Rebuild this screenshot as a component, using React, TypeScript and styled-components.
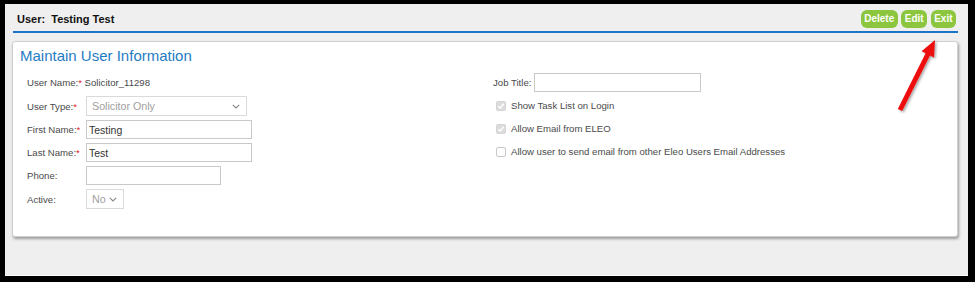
import React from "react";
import styled, { createGlobalStyle } from "styled-components";

const Global = createGlobalStyle`
  html, body { margin: 0; padding: 0; background: #000; }
  body { font-family: "Liberation Sans", Arial, sans-serif; }
`;

const Frame = styled.div`
  position: relative;
  width: 975px;
  height: 282px;
  box-sizing: border-box;
  background: #000;
  padding: 4px 7px 6px 5px;
`;

const Page = styled.div`
  height: 100%;
  box-sizing: border-box;
  background: #efefef;
  border-bottom: 1px solid #fbfbfb;
  padding: 0 10px 0 7px;
  display: flex;
  flex-direction: column;
`;

const Header = styled.div`
  height: 29px;
  box-sizing: border-box;
  display: flex;
  align-items: center;
  justify-content: space-between;
  border-bottom: 2px solid #1c74c6;
  margin-left: 1px;
  padding: 0 2px 0 4px;
`;

const HeaderTitle = styled.div`
  font-size: 11px;
  font-weight: bold;
  color: #111;
  padding-top: 2px;
`;

const Buttons = styled.div`
  display: flex;
  gap: 3.5px;
  padding-top: 2px;
`;

const GreenButton = styled.button`
  height: 18px;
  padding: 0 3.5px;
  border: none;
  border-radius: 6px;
  background: #8cc63e;
  color: #fff;
  font-family: "Liberation Sans", Arial, sans-serif;
  font-size: 10px;
  font-weight: bold;
  line-height: 18px;
`;

const Card = styled.div`
  margin-top: 8px;
  height: 196px;
  box-sizing: border-box;
  background: #fff;
  border: 1px solid #cfcfcf;
  border-radius: 3px;
  box-shadow: 1px 2px 3px rgba(0, 0, 0, 0.35);
  padding: 5px 7px 0 7px;
`;

const CardTitle = styled.div`
  font-size: 15px;
  color: #1f7cc2;
  line-height: 18px;
`;

const Form = styled.div`
  display: grid;
  grid-template-columns: 466px 1fr;
  padding: 8px 0 0 7px;
`;

const Column = styled.div`
  display: flex;
  flex-direction: column;
  gap: 4px;
`;

const Row = styled.div<{ $indent?: number }>`
  display: flex;
  align-items: center;
  min-height: 19px;
  padding-left: ${(p) => p.$indent ?? 0}px;
`;

const Label = styled.div<{ $width?: number }>`
  width: ${(p) => (p.$width ? `${p.$width}px` : "auto")};
  flex: none;
  font-size: 9.6px;
  color: #4a4a4a;
  white-space: nowrap;
`;

const Req = styled.span`
  color: #e0201a;
`;

const Value = styled.span`
  font-size: 9.6px;
  color: #4a4a4a;
`;

const TextBox = styled.div<{ $width: number }>`
  width: ${(p) => p.$width}px;
  height: 19px;
  box-sizing: border-box;
  border: 1px solid #c9c9c9;
  background: #fff;
  font-size: 10.5px;
  color: #333;
  padding: 0 2px;
  display: flex;
  align-items: center;
`;

const SelectBox = styled.div<{ $width: number }>`
  width: ${(p) => p.$width}px;
  height: 20px;
  box-sizing: border-box;
  border: 1px solid #dadada;
  background: #fff;
  font-size: 10.7px;
  color: #a0a0a0;
  padding: 0 6px 0 5px;
  display: flex;
  align-items: center;
  justify-content: space-between;
`;

const Check = styled.div<{ $checked?: boolean }>`
  width: 10px;
  height: 10px;
  box-sizing: border-box;
  flex: none;
  border-radius: 2px;
  border: 1px solid ${(p) => (p.$checked ? "#d4d4d4" : "#c8c8c8")};
  background: ${(p) => (p.$checked ? "#dcdcdc" : "#fff")};
  margin-right: 5px;
  display: flex;
  align-items: center;
  justify-content: center;
`;

const Arrow = styled.svg`
  position: absolute;
  left: 890px;
  top: 34px;
  overflow: visible;
`;

const Chevron = () => (
  <svg width="8" height="5" viewBox="0 0 8 5">
    <path d="M0.8 0.8 L4 4 L7.2 0.8" fill="none" stroke="#888" strokeWidth="1.1" />
  </svg>
);

const Tick = () => (
  <svg width="8" height="8" viewBox="0 0 8 8">
    <path d="M1.3 4.2 L3.2 6 L6.7 1.8" fill="none" stroke="#fff" strokeWidth="1.4" />
  </svg>
);

export default function App() {
  return (
    <>
      <Global />
      <Frame>
        <Page>
          <Header>
            <HeaderTitle>User:&nbsp;&nbsp;Testing Test</HeaderTitle>
            <Buttons>
              <GreenButton>Delete</GreenButton>
              <GreenButton>Edit</GreenButton>
              <GreenButton>Exit</GreenButton>
            </Buttons>
          </Header>
          <Card>
            <CardTitle>Maintain User Information</CardTitle>
            <Form>
              <Column>
                <Row>
                  <Label>
                    User Name:<Req>*</Req>
                  </Label>
                  <Value>&nbsp;Solicitor_11298</Value>
                </Row>
                <Row>
                  <Label $width={59}>
                    User Type:<Req>*</Req>
                  </Label>
                  <SelectBox $width={161}>
                    Solicitor Only
                    <Chevron />
                  </SelectBox>
                </Row>
                <Row>
                  <Label $width={59}>
                    First Name:<Req>*</Req>
                  </Label>
                  <TextBox $width={166}>Testing</TextBox>
                </Row>
                <Row>
                  <Label $width={59}>
                    Last Name:<Req>*</Req>
                  </Label>
                  <TextBox $width={166}>Test</TextBox>
                </Row>
                <Row>
                  <Label $width={59}>Phone:</Label>
                  <TextBox $width={135} />
                </Row>
                <Row>
                  <Label $width={59}>Active:</Label>
                  <SelectBox $width={38}>
                    No
                    <Chevron />
                  </SelectBox>
                </Row>
              </Column>
              <Column>
                <Row>
                  <Label>Job Title:&nbsp;</Label>
                  <TextBox $width={167} />
                </Row>
                <Row $indent={3}>
                  <Check $checked>
                    <Tick />
                  </Check>
                  <Label>Show Task List on Login</Label>
                </Row>
                <Row $indent={3}>
                  <Check $checked>
                    <Tick />
                  </Check>
                  <Label>Allow Email from ELEO</Label>
                </Row>
                <Row $indent={3}>
                  <Check />
                  <Label>Allow user to send email from other Eleo Users Email Addresses</Label>
                </Row>
              </Column>
            </Form>
          </Card>
        </Page>
        <Arrow width="55" height="84" viewBox="0 0 55 84">
          <defs>
            <filter id="sh" x="-30%" y="-30%" width="160%" height="160%">
              <feDropShadow dx="1.5" dy="1.5" stdDeviation="1" floodColor="#000" floodOpacity="0.35" />
            </filter>
          </defs>
          <polygon
            points="45,6 44,23.4 40,21.4 12.2,77.1 7.8,74.9 35.6,19.2 31.5,17.2"
            fill="#ee1111"
            filter="url(#sh)"
          />
        </Arrow>
      </Frame>
    </>
  );
}
